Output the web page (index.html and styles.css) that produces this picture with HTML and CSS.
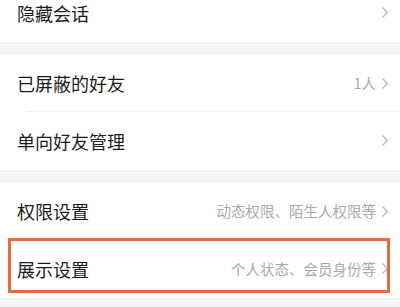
FILE: index.html
```html
<!DOCTYPE html>
<html lang="zh-CN">
<head>
    <meta charset="UTF-8">
    <meta name="viewport" content="width=device-width, initial-scale=1.0">
    <title>隐私设置</title>
    <link rel="stylesheet" href="styles.css">
</head>
<body>
    <div class="settings">
        <div class="group group-first">
            <div class="item">
                <span class="label">隐藏会话</span>
                <span class="extra">
                    <svg class="arrow" viewBox="0 0 8 13"><polyline points="1.5,1.5 6.5,6.5 1.5,11.5"/></svg>
                </span>
            </div>
        </div>

        <div class="group">
            <div class="item item-line">
                <span class="label">已屏蔽的好友</span>
                <span class="extra">
                    <span class="desc">1人</span>
                    <svg class="arrow" viewBox="0 0 8 13"><polyline points="1.5,1.5 6.5,6.5 1.5,11.5"/></svg>
                </span>
            </div>
            <div class="item">
                <span class="label">单向好友管理</span>
                <span class="extra">
                    <svg class="arrow" viewBox="0 0 8 13"><polyline points="1.5,1.5 6.5,6.5 1.5,11.5"/></svg>
                </span>
            </div>
        </div>

        <div class="group">
            <div class="item">
                <span class="label">权限设置</span>
                <span class="extra">
                    <span class="desc">动态权限、陌生人权限等</span>
                    <svg class="arrow" viewBox="0 0 8 13"><polyline points="1.5,1.5 6.5,6.5 1.5,11.5"/></svg>
                </span>
            </div>
            <div class="item item-marked">
                <span class="label">展示设置</span>
                <span class="extra">
                    <span class="desc">个人状态、会员身份等</span>
                    <svg class="arrow" viewBox="0 0 8 13"><polyline points="1.5,1.5 6.5,6.5 1.5,11.5"/></svg>
                </span>
                <div class="mark"></div>
            </div>
        </div>
    </div>
</body>
</html>
```

FILE: styles.css
```css
* {
    margin: 0;
    padding: 0;
    box-sizing: border-box;
}

html, body {
    height: 100%;
    overflow: hidden;
}

body {
    font-family: "Noto Sans CJK SC", "Noto Sans", sans-serif;
    background: #f5f5f6;
    color: #1c1c1c;
}

.settings {
    display: flex;
    flex-direction: column;
    gap: 13px;
}

.group {
    background: #fff;
}

.group-first {
    margin-top: -16px;
}

.item {
    position: relative;
    height: 57.5px;
    display: flex;
    align-items: center;
    justify-content: space-between;
    padding: 0 11px 0 17px;
}

.item-line::after {
    content: "";
    position: absolute;
    left: 26px;
    right: 0;
    bottom: 0;
    height: 1px;
    background: #f1f1f1;
}

.label {
    font-size: 18px;
    line-height: 1;
}

.extra {
    display: flex;
    align-items: center;
    gap: 5px;
}

.desc {
    font-size: 14.5px;
    color: #aaaaaa;
    line-height: 1;
}

.arrow {
    width: 8px;
    height: 13px;
    fill: none;
    stroke: #b8b8b8;
    stroke-width: 1.4;
}

/* orange annotation frame */
.mark {
    position: absolute;
    left: 8px;
    top: -2px;
    width: 382px;
    height: 55px;
    border: 3px solid #ea6a3f;
}
```
